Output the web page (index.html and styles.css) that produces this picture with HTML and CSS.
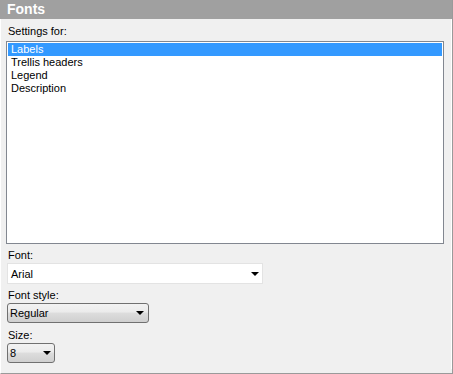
FILE: index.html
```html
<!DOCTYPE html>
<html lang="en">
<head>
    <meta charset="UTF-8">
    <title>Fonts</title>
    <link rel="stylesheet" href="styles.css">
</head>
<body>
    <div class="panel">
        <div class="panel-header">Fonts</div>
        <div class="panel-body">
            <div class="field-label first">Settings for:</div>
            <ul class="listbox">
                <li class="selected">Labels</li>
                <li>Trellis headers</li>
                <li>Legend</li>
                <li>Description</li>
            </ul>

            <div class="field-label">Font:</div>
            <div class="combo combo-flat combo-font">
                <span>Arial</span>
                <span class="arrow"></span>
            </div>

            <div class="field-label">Font style:</div>
            <div class="combo combo-button combo-style">
                <span>Regular</span>
                <span class="arrow"></span>
            </div>

            <div class="field-label">Size:</div>
            <div class="combo combo-button combo-size">
                <span>8</span>
                <span class="arrow"></span>
            </div>
        </div>
    </div>
</body>
</html>
```

FILE: styles.css
```css
body {
    margin: 0;
    font-family: 'Liberation Sans', Arial, sans-serif;
    font-size: 11px;
    color: #000;
    background: #f0f0f0;
}

.panel {
    width: 453px;
    height: 374px;
    box-sizing: border-box;
    background: #f0f0f0;
    border-left: 1px solid #ffffff;
    border-right: 1px solid #9a9a9a;
    border-bottom: 1px solid #9a9a9a;
    display: flex;
    flex-direction: column;
}

.panel-header {
    height: 19px;
    background: #a0a0a0;
    color: #fff;
    font-weight: bold;
    font-size: 14px;
    line-height: 19px;
    padding-left: 7px;
    margin-left: -1px;
}

.panel-body {
    padding: 6px 7px 0 5px;
    border-right: 1px solid #fff;
}

.field-label {
    height: 13px;
    line-height: 13px;
    margin-bottom: 1px;
    padding-left: 2px;
}

.field-label.first {
    margin-bottom: 3px;
}

.listbox {
    list-style: none;
    margin: 0 0 5px 0;
    padding: 1px;
    height: 199px;
    background: #fff;
    border: 1px solid #828790;
}

.listbox li {
    height: 13px;
    line-height: 13px;
    padding-left: 3px;
}

.listbox li.selected {
    background: #3399ff;
    color: #fff;
}

.combo {
    display: flex;
    align-items: center;
    justify-content: space-between;
    box-sizing: border-box;
    height: 21px;
    padding: 0 3px 0 2px;
    margin-bottom: 5px;
    margin-left: 1px;
}

.combo-flat {
    background: #fff;
    border: 1px solid #e3e3e3;
}

.combo-font {
    width: 256px;
    padding-left: 3px;
}

.combo-button {
    background: linear-gradient(#f2f2f2, #ebebeb 45%, #dddddd 50%, #cfcfcf);
    border: 1px solid #707070;
    border-radius: 3px;
    height: 20px;
    margin-bottom: 6px;
}

.combo-style {
    width: 142px;
    padding-right: 4px;
}

.combo-size {
    width: 48px;
}

.arrow {
    width: 0;
    height: 0;
    border-left: 4px solid transparent;
    border-right: 4px solid transparent;
    border-top: 4px solid #000;
}
```
